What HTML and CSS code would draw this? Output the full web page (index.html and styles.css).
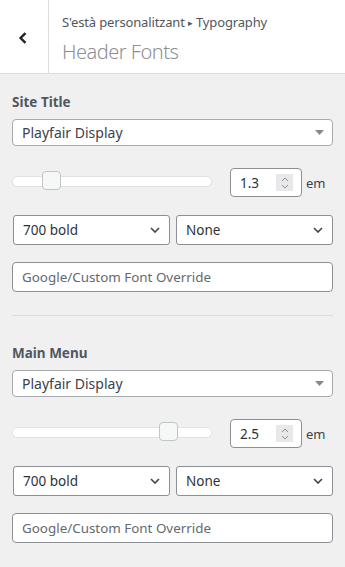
FILE: index.html
```html
<!DOCTYPE html>
<html lang="ca">
<head>
<meta charset="utf-8">
<title>Header Fonts</title>
<link rel="stylesheet" href="styles.css">
</head>
<body>
<header class="head">
  <div class="back">
    <svg width="10" height="12" viewBox="0 0 10 12"><path d="M7.5 1.2 L2.6 6 L7.5 10.8" fill="none" stroke="#1d2327" stroke-width="2.4"/></svg>
  </div>
  <div class="titles">
    <div class="crumb">S'està personalitzant <span class="tri">▸</span> Typography</div>
    <div class="title">Header Fonts</div>
  </div>
</header>
<main class="content">
  <section class="group">
    <div class="label">Site Title</div>
    <div class="combo"><span>Playfair Display</span><svg class="caret" width="9" height="5" viewBox="0 0 9 5"><path d="M0 0 H9 L4.5 5 Z" fill="#888"/></svg></div>
    <div class="sizer">
      <div class="track"><div class="thumb thumb-a"></div></div>
      <div class="num"><span class="val">1.3</span><span class="spin"><svg width="8" height="14" viewBox="0 0 8 14"><path d="M1 5 L4 2 L7 5 M1 9 L4 12 L7 9" fill="none" stroke="#8c8f94" stroke-width="1"/></svg></span></div>
      <span class="unit">em</span>
    </div>
    <div class="pair">
      <div class="sel"><span>700 bold</span><svg width="10" height="6" viewBox="0 0 10 6"><path d="M1 1 L5 5 L9 1" fill="none" stroke="#3c434a" stroke-width="1.6"/></svg></div>
      <div class="sel"><span>None</span><svg width="10" height="6" viewBox="0 0 10 6"><path d="M1 1 L5 5 L9 1" fill="none" stroke="#3c434a" stroke-width="1.6"/></svg></div>
    </div>
    <div class="field">Google/Custom Font Override</div>
  </section>
  <hr class="divider">
  <section class="group">
    <div class="label">Main Menu</div>
    <div class="combo"><span>Playfair Display</span><svg class="caret" width="9" height="5" viewBox="0 0 9 5"><path d="M0 0 H9 L4.5 5 Z" fill="#888"/></svg></div>
    <div class="sizer">
      <div class="track"><div class="thumb thumb-b"></div></div>
      <div class="num"><span class="val">2.5</span><span class="spin"><svg width="8" height="14" viewBox="0 0 8 14"><path d="M1 5 L4 2 L7 5 M1 9 L4 12 L7 9" fill="none" stroke="#8c8f94" stroke-width="1"/></svg></span></div>
      <span class="unit">em</span>
    </div>
    <div class="pair">
      <div class="sel"><span>700 bold</span><svg width="10" height="6" viewBox="0 0 10 6"><path d="M1 1 L5 5 L9 1" fill="none" stroke="#3c434a" stroke-width="1.6"/></svg></div>
      <div class="sel"><span>None</span><svg width="10" height="6" viewBox="0 0 10 6"><path d="M1 1 L5 5 L9 1" fill="none" stroke="#3c434a" stroke-width="1.6"/></svg></div>
    </div>
    <div class="field">Google/Custom Font Override</div>
  </section>
</main>
</body>
</html>
```
FILE: styles.css
```css
* { box-sizing: border-box; }
body {
  margin: 0;
  background: #f0f0f1;
  font-family: "Noto Sans", "Open Sans", sans-serif;
  color: #2c3338;
}
.head {
  display: flex;
  height: 74px;
  background: #fff;
  border-bottom: 1px solid #dcdcde;
}
.back {
  width: 49px;
  border-right: 1px solid #dcdcde;
  display: flex;
  align-items: center;
  justify-content: center;
  padding-top: 2px;
  padding-right: 2px;
}
.titles {
  padding: 12px 0 0 13px;
}
.crumb {
  font-size: 13px;
  line-height: 20px;
  color: #50575e;
  letter-spacing: -0.15px;
}
.tri { font-size: 9px; position: relative; top: -1px; }
.title {
  margin-top: 5px;
  font-size: 20px;
  line-height: 26px;
  font-weight: 300;
  color: #8c8f94;
  letter-spacing: -0.5px;
}
.content { padding: 0 12px; }
.group { display: flex; flex-direction: column; }
.label {
  margin-top: 18px;
  font-size: 13.5px;
  line-height: 20px;
  font-weight: 700;
  color: #50575e;
}
.combo {
  margin-top: 7px;
  height: 27px;
  background: #fff;
  border: 1px solid #a7aaad;
  border-radius: 4px;
  display: flex;
  align-items: center;
  justify-content: space-between;
  padding: 0 8px 0 9px;
  font-size: 14px;
  color: #3c434a;
}
.caret { margin-top: -1px; }
.sizer {
  margin-top: 22px;
  height: 29px;
  display: flex;
  align-items: center;
}
.track {
  position: relative;
  width: 200px;
  height: 11px;
  background: #fff;
  border: 1px solid #e2e2e4;
  border-radius: 6px;
  margin-top: -2px;
}
.thumb {
  position: absolute;
  top: -6px;
  width: 19px;
  height: 19px;
  background: #f6f7f7;
  border: 1px solid #c3c4c7;
  border-radius: 4px;
}
.thumb-a { left: 29px; }
.thumb-b { left: 146px; }
.num {
  margin-left: 18px;
  width: 72px;
  height: 29px;
  background: #fff;
  border: 1px solid #8c8f94;
  border-radius: 4px;
  display: flex;
  align-items: center;
  padding-left: 9px;
  font-size: 13.5px;
  color: #2c3338;
}
.val { flex: 1; }
.spin {
  width: 17px;
  height: 17px;
  margin-right: 8px;
  background: #e8e8ea;
  display: flex;
  align-items: center;
  justify-content: center;
}
.unit {
  margin-left: 4px;
  font-size: 13px;
  color: #3c434a;
}
.pair {
  margin-top: 18px;
  display: grid;
  grid-template-columns: 1fr 1fr;
  gap: 6px;
  padding-left: 1px;
}
.sel {
  height: 30px;
  background: #fff;
  border: 1px solid #8c8f94;
  border-radius: 3px;
  display: flex;
  align-items: center;
  justify-content: space-between;
  padding: 0 9px 0 9px;
  font-size: 13.5px;
  color: #2c3338;
}
.field {
  margin-top: 17px;
  height: 30px;
  background: #fff;
  border: 1px solid #8c8f94;
  border-radius: 4px;
  display: flex;
  align-items: center;
  padding-left: 9px;
  font-size: 13.4px;
  color: #646970;
}
.divider {
  margin: 23px 0 9px;
  border: 0;
  border-top: 1px solid #dcdcde;
  height: 0;
}
```
